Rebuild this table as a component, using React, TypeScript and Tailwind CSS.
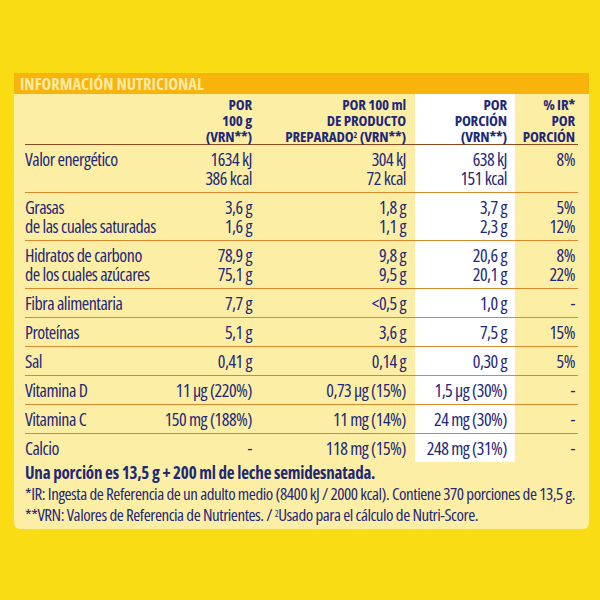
type Row = {
  label: string[];
  c1: string[];
  c2: string[];
  c3: string[];
  c4: string[];
};

const rows: Row[] = [
  { label: ["Valor energético"], c1: ["1634 kJ", "386 kcal"], c2: ["304 kJ", "72 kcal"], c3: ["638 kJ", "151 kcal"], c4: ["8%"] },
  { label: ["Grasas", "de las cuales saturadas"], c1: ["3,6 g", "1,6 g"], c2: ["1,8 g", "1,1 g"], c3: ["3,7 g", "2,3 g"], c4: ["5%", "12%"] },
  { label: ["Hidratos de carbono", "de los cuales azúcares"], c1: ["78,9 g", "75,1 g"], c2: ["9,8 g", "9,5 g"], c3: ["20,6 g", "20,1 g"], c4: ["8%", "22%"] },
  { label: ["Fibra alimentaria"], c1: ["7,7 g"], c2: ["<0,5 g"], c3: ["1,0 g"], c4: ["-"] },
  { label: ["Proteínas"], c1: ["5,1 g"], c2: ["3,6 g"], c3: ["7,5 g"], c4: ["15%"] },
  { label: ["Sal"], c1: ["0,41 g"], c2: ["0,14 g"], c3: ["0,30 g"], c4: ["5%"] },
  { label: ["Vitamina D"], c1: ["11 µg (220%)"], c2: ["0,73 µg (15%)"], c3: ["1,5 µg (30%)"], c4: ["-"] },
  { label: ["Vitamina C"], c1: ["150 mg (188%)"], c2: ["11 mg (14%)"], c3: ["24 mg (30%)"], c4: ["-"] },
  { label: ["Calcio"], c1: ["-"], c2: ["118 mg (15%)"], c3: ["248 mg (31%)"], c4: ["-"] },
];

const grid = "grid grid-cols-[130px_97px_163px_100px_63px]";

function Lines({ items }: { items: string[] }) {
  return (
    <>
      {items.map((t) => (
        <div key={t} className="whitespace-nowrap">
          {t}
        </div>
      ))}
    </>
  );
}

export default function App() {
  return (
    <div className="h-[600px] w-[600px] bg-[#f9dc14] pl-[14px] pt-[73px] font-['Open_Sans',sans-serif] text-[#1d2878] [font-stretch:75%]">
      <div className="w-[575px] overflow-hidden rounded-b-md bg-[#fdeea6]">
        {/* Title bar */}
        <div className="h-[21px] bg-[#f8b30d] pl-[6px] text-[16.5px] font-bold leading-[22px] text-[#fdeaa3]">
          INFORMACIÓN NUTRICIONAL
        </div>

        <div className="px-[11px]">
          {/* Column headings */}
          <div className={`${grid} border-b-[1.5px] border-[#8d4a1e] text-[15px] font-bold leading-[16px] tracking-[-0.15px]`}>
            <div />
            <div className="pt-[2px] text-right">
              POR
              <br />
              100 g
              <br />
              (VRN**)
            </div>
            <div className="whitespace-nowrap pr-[9px] pt-[2px] text-right">
              POR 100 ml
              <br />
              DE PRODUCTO
              <br />
              PREPARADO<sup className="text-[8px]">2</sup> (VRN**)
            </div>
            <div className="bg-white pr-[8px] pt-[2px] text-right">
              POR
              <br />
              PORCIÓN
              <br />
              (VRN**)
            </div>
            <div className="pr-[3px] pt-[2px] text-right">
              % IR*
              <br />
              POR
              <br />
              PORCIÓN
            </div>
          </div>

          {/* Body rows */}
          {rows.map((r, i) => (
            <div
              key={r.label[0]}
              className={`${grid} text-[18px] leading-[19px] tracking-[-0.5px] ${
                i < rows.length - 1 ? "border-b border-[#d9892c]" : ""
              }`}
            >
              <div className="pb-[4px] pt-[5px]">
                <Lines items={r.label} />
              </div>
              <div className="pb-[4px] pt-[5px] text-right">
                <Lines items={r.c1} />
              </div>
              <div className="pb-[4px] pr-[9px] pt-[5px] text-right">
                <Lines items={r.c2} />
              </div>
              <div className="bg-white pb-[4px] pr-[8px] pt-[5px] text-right">
                <Lines items={r.c3} />
              </div>
              <div className="pb-[4px] pr-[3px] pt-[5px] text-right">
                <Lines items={r.c4} />
              </div>
            </div>
          ))}

          {/* Notes */}
          <div className="pb-[4px] text-[17px] leading-[21px] tracking-[-0.45px]">
            <div className="whitespace-nowrap font-bold tracking-[-0.2px]">
              Una porción es 13,5 g + 200 ml de leche semidesnatada.
            </div>
            <div className="whitespace-nowrap">
              *IR: Ingesta de Referencia de un adulto medio (8400 kJ / 2000 kcal). Contiene 370 porciones de 13,5 g.
            </div>
            <div className="whitespace-nowrap">
              **VRN: Valores de Referencia de Nutrientes. / <sup className="text-[9px]">2</sup>Usado para el cálculo de Nutri-Score.
            </div>
          </div>
        </div>
      </div>
    </div>
  );
}
